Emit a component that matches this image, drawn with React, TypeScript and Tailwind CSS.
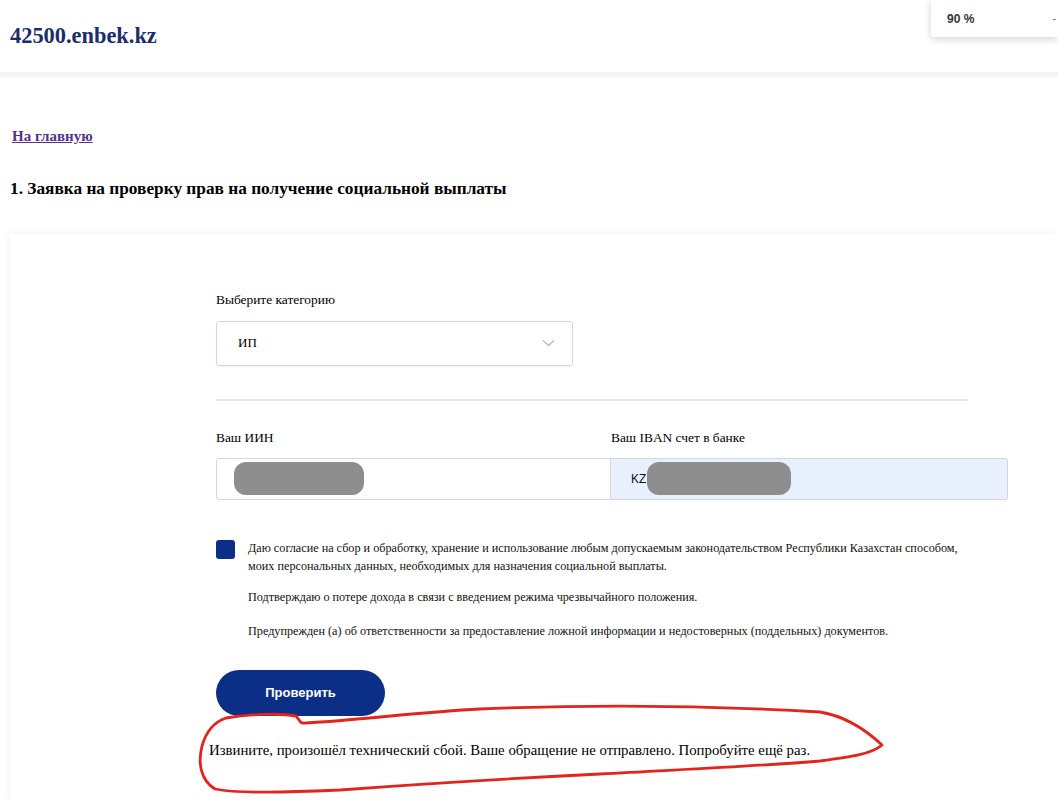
import React from "react";

const serif = "font-[Liberation_Serif,Times_New_Roman,serif]";
const sans = "font-[Liberation_Sans,Arial,sans-serif]";

// hand-drawn red annotation around the error message
const ErrorOutline: React.FC = () => (
  <svg
    className="pointer-events-none absolute left-0 top-0"
    width="1058"
    height="800"
    viewBox="0 0 1058 800"
    fill="none"
  >
    <path
      d="M226 718 C250 714 280 713 296 716 C300 720 299 724 306 723 C360 720 420 712 480 709 C600 704 720 706 820 712 C845 716 866 730 882 745 C872 754 850 757 820 761 C760 766 690 769 600 774 C500 779 420 784 340 790 C290 792 240 794 215 789 C200 780 198 762 202 746 C206 732 214 722 226 718 Z"
      stroke="#e3241c"
      strokeWidth="2.8"
      strokeLinejoin="round"
    />
  </svg>
);

const App: React.FC = () => {
  return (
    <div className="relative min-h-[800px] w-[1058px] overflow-hidden bg-white text-black">
      {/* Header */}
      <header className="flex h-[72px] items-center px-[10px]">
        <span className={`${serif} text-[22.4px] font-bold text-[#1c2d6e]`}>42500.enbek.kz</span>
      </header>
      <div className="h-[5px] bg-[#f3f3f3]" />

      {/* Zoom popup */}
      <div className="absolute right-0 top-0 flex h-[37px] w-[127px] items-center justify-between rounded-bl-[3px] bg-white pl-[16px] pr-[2px] shadow-[0_2px_8px_rgba(0,0,0,0.18)]">
        <span className={`${sans} text-[12px] font-semibold text-[#333]`}>90 %</span>
        <span className="text-[10px] text-[#555]">-</span>
      </div>

      <div className="px-[10px]">
        <a
          href="#"
          className={`${serif} ml-[2px] mt-[48px] inline-block text-[15px] font-bold text-[#56308a] underline`}
        >
          На главную
        </a>
        <h1 className={`${serif} mt-[28px] text-[17.3px] font-bold`}>
          1. Заявка на проверку прав на получение социальной выплаты
        </h1>
      </div>

      {/* Card */}
      <div className="ml-[10px] mt-[33px] bg-white pb-[40px] pl-[206px] pr-[50px] pt-[56px] shadow-[0_0_8px_rgba(0,0,0,0.07)]">
        <div className="w-[792px]">
          <div className={`${serif} text-[13.4px]`}>Выберите категорию</div>
          <div className="mt-[10px] flex h-[45px] w-[357px] items-center justify-between rounded-[3px] border border-[#d6d6d6] pl-[21px] pr-[17px] shadow-[0_1px_2px_rgba(0,0,0,0.05)]">
            <span className={`${serif} text-[13px]`}>ИП</span>
            <svg width="13" height="8" viewBox="0 0 13 8" fill="none">
              <path d="M1 1.5 L6.5 6.5 L12 1.5" stroke="#b5b5b5" strokeWidth="1.2" />
            </svg>
          </div>

          <div className="mt-[33px] h-[2px] w-[752px] bg-[#e6e6e6]" />

          <div className="mt-[27px] grid grid-cols-[395px_397px]">
            <div>
              <div className={`${serif} text-[13.4px]`}>Ваш ИИН</div>
              <div className="mt-[10px] flex h-[42px] items-center rounded-l-[3px] border border-[#d6d6d6] bg-white pl-[17px]">
                <div className="h-[33px] w-[130px] rounded-[12px] bg-[#8e8e8e]" />
              </div>
            </div>
            <div>
              <div className={`${serif} text-[13.4px]`}>Ваш IBAN счет в банке</div>
              <div className="mt-[10px] flex h-[42px] items-center rounded-r-[3px] border border-l-0 border-[#d6d6d6] bg-[#e8f0fe] pl-[20px]">
                <span className={`${sans} text-[12px] text-[#111]`}>KZ</span>
                <div className="ml-[1px] h-[33px] w-[144px] rounded-[12px] bg-[#8e8e8e]" />
              </div>
            </div>
          </div>

          <div className="mt-[39px] flex">
            <div className="mt-[1px] h-[19px] w-[19px] shrink-0 rounded-[3px] bg-[#0b2f86]" />
            <div className={`${serif} ml-[13px] text-[12.2px] leading-[18px] text-[#111]`}>
              <p>
                Даю согласие на сбор и обработку, хранение и использование любым допускаемым законодательством Республики Казахстан способом,
                <br />
                моих персональных данных, необходимых для назначения социальной выплаты.
              </p>
              <p className="mt-[13px]">Подтверждаю о потере дохода в связи с введением режима чрезвычайного положения.</p>
              <p className="mt-[16px]">
                Предупрежден (а) об ответственности за предоставление ложной информации и недостоверных (поддельных) документов.
              </p>
            </div>
          </div>

          <button
            className={`${sans} mt-[30px] flex h-[46px] w-[169px] items-center justify-center rounded-full bg-[#0b2f86] text-[13px] font-bold text-white`}
          >
            Проверить
          </button>

          <p className={`${serif} -ml-[7px] mt-[23px] text-[14.8px]`}>
            Извините, произошёл технический сбой. Ваше обращение не отправлено. Попробуйте ещё раз.
          </p>
        </div>
      </div>

      <ErrorOutline />
    </div>
  );
};

export default App;
